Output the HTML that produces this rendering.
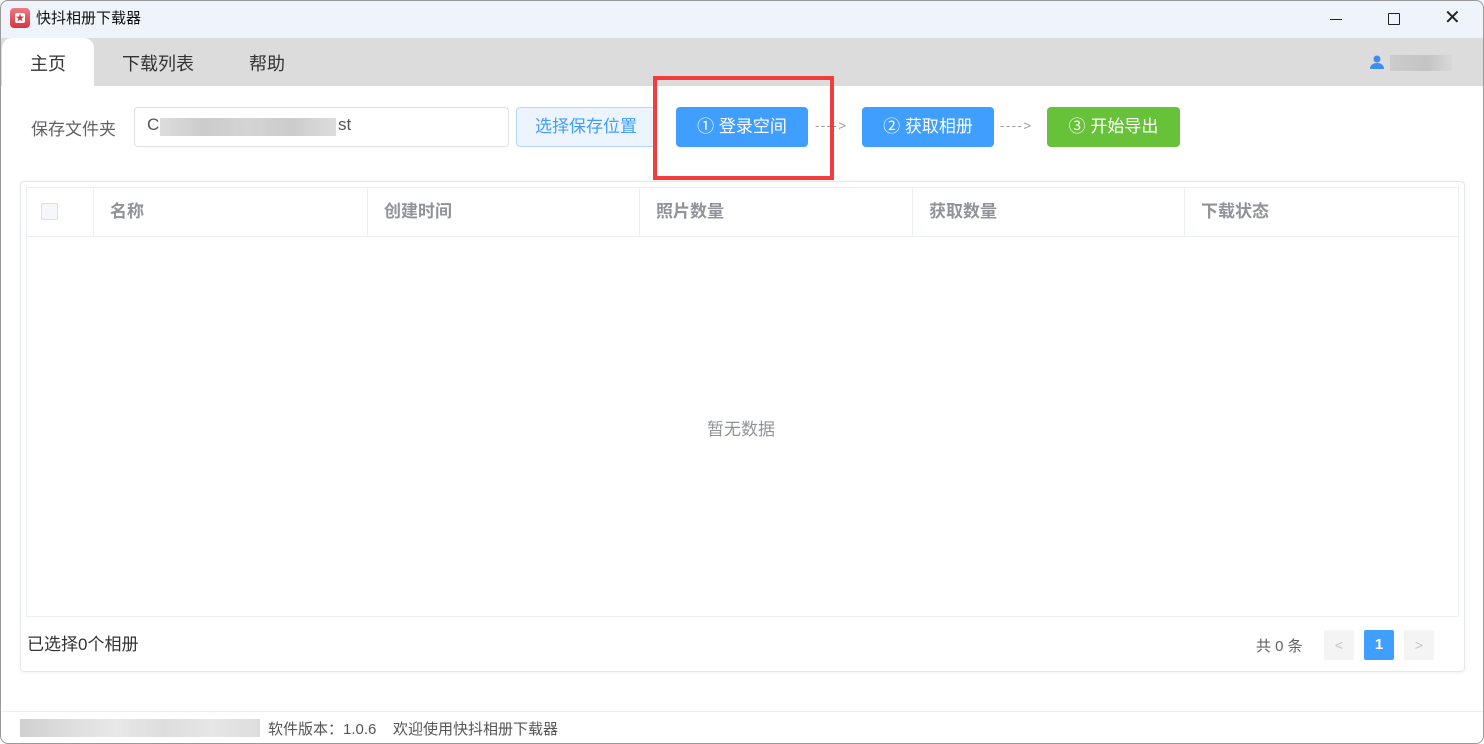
<!DOCTYPE html>
<html><head><meta charset="utf-8"><style>
*{margin:0;padding:0;box-sizing:border-box}
body{width:1484px;height:744px;overflow:hidden;background:#fff;font-family:"Liberation Sans","Noto Sans CJK SC",sans-serif;position:relative}
.a{position:absolute}
.btn{position:absolute;top:107px;height:40px;border-radius:4px;color:#fff;font-size:17px;line-height:40px;text-align:center}
.th{position:absolute;top:187px;height:50px;line-height:50px;font-size:17px;font-weight:bold;color:#909399;padding-left:16px;border-right:1px solid #ebeef5}
.arr{position:absolute;top:118px;font-size:13px;color:#999;letter-spacing:1.5px}
</style></head><body>
<div class="a" style="left:0;top:0;width:1484px;height:38px;background:#eef4f9"></div>
<div class="a" style="left:10px;top:8px;width:20px;height:20px;border-radius:4px;background:linear-gradient(#f07a84,#d8343f)"><div style="position:absolute;left:5px;top:5px;width:10px;height:10px;background:#fff;border-radius:2px;color:#d8343f;font-size:9px;line-height:10px;text-align:center">★</div></div>
<div class="a" style="left:36px;top:7px;font-size:15px;color:#111">快抖相册下载器</div>
<div class="a" style="left:1330px;top:19px;width:12px;height:1px;background:#222"></div>
<div class="a" style="left:1388px;top:13px;width:12px;height:12px;border:1.3px solid #222;border-radius:1px"></div>
<div class="a" style="left:1444px;top:5px;font-size:20px;color:#222">✕</div>
<div class="a" style="left:0;top:38px;width:1484px;height:48px;background:#dcdcdc"></div>
<div class="a" style="left:2px;top:38px;width:92px;height:48px;background:#fff;border-radius:10px 10px 0 0"></div>
<div class="a" style="left:30px;top:50px;font-size:18px;color:#333">主页</div>
<div class="a" style="left:122px;top:50px;font-size:18px;color:#333">下载列表</div>
<div class="a" style="left:249px;top:50px;font-size:18px;color:#333">帮助</div>
<svg class="a" style="left:1369px;top:54px" width="16" height="16" viewBox="0 0 16 16"><circle cx="8" cy="5" r="3.5" fill="#3c8ef0"/><path d="M1 15c0-4 3-6 7-6s7 2 7 6z" fill="#3c8ef0"/></svg>
<div class="a" style="left:1390px;top:55px;width:62px;height:16px;background:linear-gradient(90deg,#ccc,#c4c4c4 60%,#d8d8d8)"></div>
<div class="a" style="left:31px;top:115px;font-size:17px;color:#606266">保存文件夹</div>
<div class="a" style="left:134px;top:107px;width:375px;height:40px;border:1px solid #dcdfe6;border-radius:4px"></div>
<div class="a" style="left:147px;top:115px;font-size:17px;color:#555">C</div>
<div class="a" style="left:160px;top:118px;width:176px;height:18px;background:linear-gradient(90deg,#ddd,#ccc,#d4d4d4,#ccc,#ddd)"></div>
<div class="a" style="left:338px;top:115px;font-size:17px;color:#555">st</div>
<div class="a" style="left:516px;top:107px;width:140px;height:40px;background:#ecf5ff;border:1px solid #b3d8ff;border-radius:4px;color:#409eff;font-size:17px;line-height:38px;text-align:center">选择保存位置</div>
<div class="btn" style="left:676px;width:132px;background:#409eff">① 登录空间</div>
<div class="arr" style="left:815px">----&gt;</div>
<div class="btn" style="left:862px;width:132px;background:#409eff">② 获取相册</div>
<div class="arr" style="left:1000px">----&gt;</div>
<div class="btn" style="left:1047px;width:133px;background:#67c23a">③ 开始导出</div>
<div class="a" style="left:653px;top:76px;width:181px;height:104px;border:4px solid #f33c3c"></div>
<div class="a" style="left:20px;top:181px;width:1445px;height:491px;border:1px solid #e4e7ed;border-radius:4px;box-shadow:0 1px 4px rgba(0,0,0,.06)"></div>
<div class="a" style="left:26px;top:187px;width:1433px;height:430px;border:1px solid #ebeef5"></div>
<div class="a" style="left:26px;top:236px;width:1433px;height:1px;background:#ebeef5"></div>
<div class="th" style="left:26px;width:68px"></div>
<div class="a" style="left:41px;top:203px;width:17px;height:17px;border:1px solid #dcdfe6;border-radius:2px;background:#f5f7fa"></div>
<div class="th" style="left:94px;width:274px">名称</div>
<div class="th" style="left:368px;width:272px">创建时间</div>
<div class="th" style="left:640px;width:273px">照片数量</div>
<div class="th" style="left:913px;width:272px">获取数量</div>
<div class="th" style="left:1185px;width:274px;border-right:none">下载状态</div>
<div class="a" style="left:707px;top:415px;font-size:17px;color:#909399">暂无数据</div>
<div class="a" style="left:27px;top:630px;font-size:17px;color:#333">已选择0个相册</div>
<div class="a" style="left:1256px;top:635px;font-size:15px;color:#606266">共 0 条</div>
<div class="a" style="left:1324px;top:630px;width:30px;height:30px;background:#f4f4f5;border-radius:2px;color:#c0c4cc;text-align:center;line-height:30px;font-size:14px">&lt;</div>
<div class="a" style="left:1364px;top:630px;width:30px;height:30px;background:#409eff;border-radius:2px;color:#fff;text-align:center;line-height:30px;font-size:15px;font-weight:bold">1</div>
<div class="a" style="left:1404px;top:630px;width:30px;height:30px;background:#f4f4f5;border-radius:2px;color:#c0c4cc;text-align:center;line-height:30px;font-size:14px">&gt;</div>
<div class="a" style="left:0;top:711px;width:1484px;height:1px;background:#eee"></div>
<div class="a" style="left:20px;top:719px;width:240px;height:18px;background:linear-gradient(90deg,#d0d0d0,#ddd,#e8e8e8,#ddd,#e6e6e6,#ddd)"></div>
<div class="a" style="left:268px;top:718px;font-size:15px;color:#555">软件版本：1.0.6 &nbsp;&nbsp; 欢迎使用快抖相册下载器</div>
<div class="a" style="left:0;top:0;width:1484px;height:744px;border:1px solid #9a9a9a;border-radius:8px;pointer-events:none"></div>
</body></html>
